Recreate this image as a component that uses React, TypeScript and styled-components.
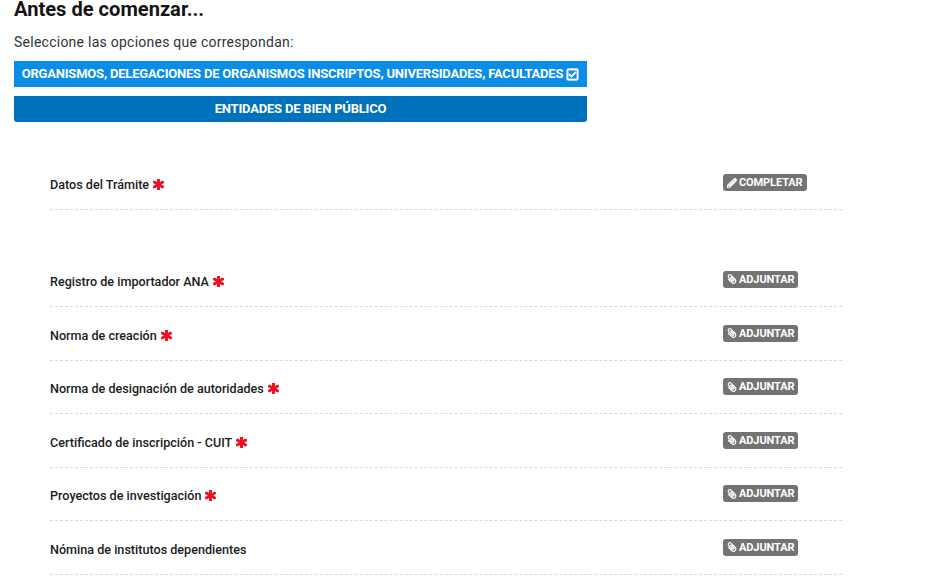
import React from 'react';
import styled, { createGlobalStyle } from 'styled-components';
import { FaAsterisk, FaPaperclip, FaPencilAlt, FaRegCheckSquare } from 'react-icons/fa';

const GlobalStyle = createGlobalStyle`
  html, body {
    margin: 0;
    padding: 0;
    background: #fff;
    overflow: hidden;
    font-family: Roboto, "Liberation Sans", sans-serif;
  }
`;

const Page = styled.div`
  width: 930px;
  height: 581px;
  overflow: hidden;
  padding: 0 0 0 14px;
  box-sizing: border-box;
`;

const Title = styled.h2`
  margin: 0;
  font-size: 20.1px;
  line-height: 18px;
  font-weight: 700;
  color: #141414;
`;

const Lead = styled.p`
  margin: 14px 0 0;
  font-size: 14px;
  line-height: 20px;
  letter-spacing: 0.25px;
  color: #333;
`;

const Options = styled.div`
  width: 573px;
  margin-top: 9px;
  display: flex;
  flex-direction: column;
  gap: 9px;
`;

const Option = styled.button<{ $active?: boolean }>`
  height: 26px;
  border: 0;
  padding: 0;
  display: flex;
  align-items: center;
  justify-content: center;
  gap: 3px;
  color: #fff;
  font: 700 13px/26px Roboto, "Liberation Sans", sans-serif;
  letter-spacing: -0.2px;
  background: ${p => (p.$active ? '#0a8de6' : '#0072bb')};
  border-radius: ${p => (p.$active ? '0' : '0 0 3px 3px')};
  svg {
    font-size: 13px;
    stroke: currentColor;
    stroke-width: 30;
  }
`;

const List = styled.div`
  width: 792px;
  margin: 36px 0 0 36px;
`;

const Row = styled.div<{ $gapAfter?: boolean }>`
  height: 52px;
  box-sizing: border-box;
  border-bottom: 1px dashed #d9d9d9;
  display: grid;
  grid-template-columns: 673px auto;
  align-items: start;
  padding-top: 18px;
  margin-bottom: ${p => (p.$gapAfter ? '43.4px' : '0')};
  &:nth-child(n + 2) { height: 53.6px; padding-top: 19.6px; }
`;

const Label = styled.span`
  font-size: 12.6px;
  line-height: 18px;
  font-weight: 500;
  color: #1c1c1c;
  display: flex;
  align-items: center;
  gap: 4px;
  svg {
    color: #ee0f24;
    font-size: 11px;
    stroke: currentColor;
    stroke-width: 50;
    margin-bottom: 1px;
  }
`;

const Action = styled.span`
  justify-self: start;
  height: 17px;
  margin-top: -2px;
  padding: 0 4px;
  display: inline-flex;
  align-items: center;
  gap: 2px;
  border-radius: 3px;
  background: #737373;
  color: #fff;
  font-size: 11px;
  font-weight: 700;
  letter-spacing: -0.1px;
`;

const PencilIcon = styled(FaPencilAlt)`
  font-size: 10px;
  stroke: currentColor;
  stroke-width: 30;
`;

const ClipIcon = styled(FaPaperclip)`
  font-size: 10px;
  transform: scaleX(-1);
`;

const docs = [
  { name: 'Registro de importador ANA', required: true },
  { name: 'Norma de creación', required: true },
  { name: 'Norma de designación de autoridades', required: true },
  { name: 'Certificado de inscripción - CUIT', required: true },
  { name: 'Proyectos de investigación', required: true },
  { name: 'Nómina de institutos dependientes', required: false },
];

export default function App() {
  return (
    <Page>
      <GlobalStyle />
      <Title>Antes de comenzar...</Title>
      <Lead>Seleccione las opciones que correspondan:</Lead>
      <Options>
        <Option $active>
          ORGANISMOS, DELEGACIONES DE ORGANISMOS INSCRIPTOS, UNIVERSIDADES, FACULTADES <FaRegCheckSquare />
        </Option>
        <Option>ENTIDADES DE BIEN PÚBLICO</Option>
      </Options>
      <List>
        <Row $gapAfter>
          <Label>Datos del Trámite <FaAsterisk /></Label>
          <Action><PencilIcon /> COMPLETAR</Action>
        </Row>
        {docs.map(doc => (
          <Row key={doc.name}>
            <Label>{doc.name} {doc.required && <FaAsterisk />}</Label>
            <Action><ClipIcon /> ADJUNTAR</Action>
          </Row>
        ))}
      </List>
    </Page>
  );
}
